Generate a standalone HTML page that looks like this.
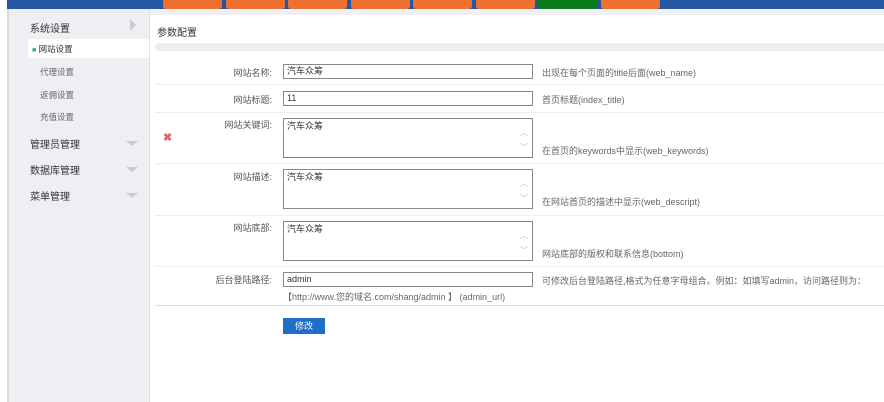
<!DOCTYPE html><html><head><meta charset="utf-8"><style>
*{margin:0;padding:0;box-sizing:border-box}
body{width:884px;height:402px;overflow:hidden;background:#fff;font-family:"Liberation Sans","Noto Sans CJK SC",sans-serif;font-size:9px;color:#333;position:relative}
.a{position:absolute}
.top{left:7px;top:0;width:877px;height:9px;background:#2456a4}
.tab{top:0;height:9px;width:59px;background:#f07030;border-radius:0 0 3px 3px}
.side{left:7px;top:9px;width:143px;height:393px;background:#efeef2;border-left:2px solid #d8d8d8;border-right:1px solid #e0e0e0}
.lab{text-align:right;width:120px;left:150px;color:#555}
.inp{left:283px;width:250px;border:1px solid #888;background:#fff;padding-left:3px;color:#333;font-size:9px}
.desc{left:542px;color:#666}
.ln{left:155px;width:729px;height:1px;background:#eee}
.arr{color:#bbb;font-size:8px;left:520px}
</style></head><body>
<div class="a top"></div>
<div class="a tab" style="left:163px"></div><div class="a tab" style="left:226px"></div><div class="a tab" style="left:288px"></div><div class="a tab" style="left:351px"></div><div class="a tab" style="left:413px"></div><div class="a tab" style="left:476px"></div><div class="a tab" style="left:538px;background:#0a7d1a"></div><div class="a tab" style="left:601px"></div>
<div class="a" style="left:7px;top:9px;width:877px;height:6px;background:#eef0f4"></div>
<div class="a side"></div>
<div class="a" style="left:30px;top:20px;font-size:10px;color:#333">系统设置</div>
<div class="a" style="left:130px;top:19px;width:0;height:0;border-left:6px solid #ccc;border-top:6px solid transparent;border-bottom:6px solid transparent"></div>
<div class="a" style="left:28px;top:39px;width:121px;height:19px;background:#fff"></div>
<div class="a" style="left:32px;top:43px;font-size:8.5px;color:#333"><span style="color:#3a8;font-size:7px">■</span> 网站设置</div>
<div class="a" style="left:40px;top:66px;font-size:8.5px;color:#666">代理设置</div>
<div class="a" style="left:40px;top:89px;font-size:8.5px;color:#666">返佣设置</div>
<div class="a" style="left:40px;top:111px;font-size:8.5px;color:#666">充值设置</div>
<div class="a" style="left:30px;top:136px;font-size:10px">管理员管理</div>
<div class="a" style="left:30px;top:162px;font-size:10px">数据库管理</div>
<div class="a" style="left:30px;top:188px;font-size:10px">菜单管理</div>
<div class="a" style="left:126px;top:141px;border-top:5px solid #ccc;border-left:6px solid transparent;border-right:6px solid transparent"></div>
<div class="a" style="left:126px;top:167px;border-top:5px solid #ccc;border-left:6px solid transparent;border-right:6px solid transparent"></div>
<div class="a" style="left:126px;top:193px;border-top:5px solid #ccc;border-left:6px solid transparent;border-right:6px solid transparent"></div>
<div class="a" style="left:157px;top:24px;font-size:10px;color:#333">参数配置</div>
<div class="a" style="left:155px;top:43px;width:729px;height:8px;background:#ededed;border-radius:4px 0 0 4px"></div>
<div class="a lab" style="top:66px;width:122px">网站名称:</div>
<div class="a inp" style="top:64px;height:15px;line-height:13px">汽车众筹</div>
<div class="a desc" style="top:66px">出现在每个页面的title后面(web_name)</div>
<div class="a ln" style="top:84px"></div>
<div class="a lab" style="top:93px;width:122px">网站标题:</div>
<div class="a inp" style="top:91px;height:15px;line-height:13px">11</div>
<div class="a desc" style="top:93px">首页标题(index_title)</div>
<div class="a ln" style="top:112px"></div>
<div class="a lab" style="top:118px;width:122px">网站关键词:</div>
<div class="a inp" style="top:118px;height:40px">汽车众筹</div>
<div class="a arr" style="top:127px">︿</div><div class="a arr" style="top:142px">﹀</div>
<div class="a desc" style="top:144px">在首页的keywords中显示(web_keywords)</div>
<div class="a" style="left:163px;top:131px;color:#e06666;font-size:11px;font-weight:bold">✖</div>
<div class="a ln" style="top:163px"></div>
<div class="a lab" style="top:170px;width:122px">网站描述:</div>
<div class="a inp" style="top:169px;height:40px">汽车众筹</div>
<div class="a arr" style="top:178px">︿</div><div class="a arr" style="top:193px">﹀</div>
<div class="a desc" style="top:195px">在网站首页的描述中显示(web_descript)</div>
<div class="a ln" style="top:215px"></div>
<div class="a lab" style="top:221px;width:122px">网站底部:</div>
<div class="a inp" style="top:221px;height:40px">汽车众筹</div>
<div class="a arr" style="top:230px">︿</div><div class="a arr" style="top:245px">﹀</div>
<div class="a desc" style="top:247px">网站底部的版权和联系信息(bottom)</div>
<div class="a ln" style="top:266px"></div>
<div class="a lab" style="top:273px;width:122px">后台登陆路径:</div>
<div class="a inp" style="top:272px;height:15px;line-height:13px">admin</div>
<div class="a desc" style="top:274px">可修改后台登陆路径,格式为任意字母组合。例如：如填写admin，访问路径则为：</div>
<div class="a" style="left:283px;top:290px;color:#666">【http://www.您的域名.com/shang/admin 】 (admin_url)</div>
<div class="a ln" style="top:305px;background:#ddd"></div>
<div class="a" style="left:283px;top:318px;width:42px;height:16px;background:#1e6fc8;color:#fff;text-align:center;line-height:16px">修改</div>
</body></html>
